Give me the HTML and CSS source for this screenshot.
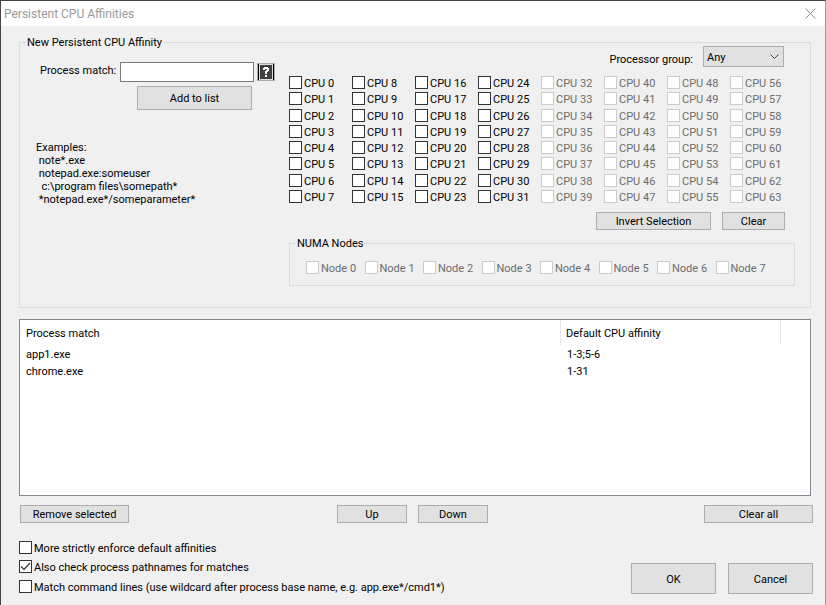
FILE: index.html
```html
<!DOCTYPE html>
<html lang="en">
<head>
<meta charset="utf-8">
<title>Persistent CPU Affinities</title>
<link rel="stylesheet" href="styles.css">
</head>
<body>
<main class="dialog">
  <header class="titlebar">
    <h1 class="title">Persistent CPU Affinities</h1>
    <button class="close" type="button" aria-label="Close">
      <svg width="11" height="11" viewBox="0 0 11 11" aria-hidden="true"><path d="M.5.5l10 10M10.5.5l-10 10" stroke="#8c8c8c" fill="none"/></svg>
    </button>
  </header>
  <form class="content">
    <fieldset class="group">
      <legend>New Persistent CPU Affinity</legend>
      <div class="columns">
        <div class="entry">
          <div class="match">
            <label for="match">Process match:</label>
            <input class="text" id="match" type="text">
            <button class="help" type="button" aria-label="Help">
              <svg width="14" height="14" viewBox="0 0 14 14" aria-hidden="true"><path d="M4 5V3h1V2h4v1h1v3H9v1H8v2H6V6h1V5h1V4H6v1zM6 10h2v2H6z" fill="#fff"/></svg>
            </button>
          </div>
          <button class="btn add" type="button">Add to list</button>
          <pre class="examples">Examples:
 note*.exe
 notepad.exe:someuser
  c:\program files\somepath*
 *notepad.exe*/someparameter*</pre>
        </div>
        <div class="processors">
          <div class="processor-group">
            <label for="pgroup">Processor group:</label>
            <select class="select" id="pgroup"><option>Any</option></select>
          </div>
          <div class="cpus" id="cpus"></div>
          <div class="cpu-actions">
            <button class="btn invert" type="button">Invert Selection</button>
            <button class="btn clear" type="button">Clear</button>
          </div>
          <fieldset class="numa">
            <legend>NUMA Nodes</legend>
            <div class="nodes" id="nodes"></div>
          </fieldset>
        </div>
      </div>
    </fieldset>
    <div class="list">
      <table>
        <thead><tr><th>Process match</th><th class="affinity">Default CPU affinity</th><th class="rest"></th></tr></thead>
        <tbody>
          <tr><td>app1.exe</td><td>1-3;5-6</td><td></td></tr>
          <tr><td>chrome.exe</td><td>1-31</td><td></td></tr>
        </tbody>
      </table>
    </div>
    <div class="list-actions">
      <button class="btn wide" type="button">Remove selected</button>
      <div class="order">
        <button class="btn move" type="button">Up</button>
        <button class="btn move" type="button">Down</button>
      </div>
      <button class="btn wide" type="button">Clear all</button>
    </div>
    <div class="footer">
      <div class="options">
        <label class="check"><input type="checkbox">More strictly enforce default affinities</label>
        <label class="check"><input type="checkbox" checked>Also check process pathnames for matches</label>
        <label class="check"><input type="checkbox">Match command lines (use wildcard after process base name, e.g. app.exe*/cmd1*)</label>
      </div>
      <div class="confirm">
        <button class="btn large" type="button">OK</button>
        <button class="btn large" type="button">Cancel</button>
      </div>
    </div>
  </form>
</main>
<script src="script.js"></script>
</body>
</html>
```
FILE: styles.css
```css
* { box-sizing: border-box; }

body {
  margin: 0;
  background: #f0f0f0;
  color: #000;
  font: 11px/13px Roboto, sans-serif;
}

.dialog {
  min-height: 100vh;
  border: 1px solid #444;
  border-right-color: #999;
  border-bottom: 0;
}

.titlebar {
  display: flex;
  align-items: center;
  justify-content: space-between;
  height: 25px;
  padding: 0 9px 0 3px;
  background: #fff;
}

.title {
  margin: 0;
  color: #999;
  font: 12px/16px Roboto, sans-serif;
}

.close {
  display: flex;
  padding: 0;
  border: 0;
  background: none;
}

.content { padding: 10px 12px 0 18px; }

fieldset {
  min-width: 0;
  margin: 0;
  padding: 0;
  border: 1px solid #dcdcdc;
}

legend {
  margin-left: 6px;
  padding: 0 1px;
}

.group {
  margin-right: 2px;
  height: 272px;
}

.columns {
  display: flex;
  justify-content: space-between;
}

.entry {
  padding: 13px 0 0 16px;
}

.match {
  display: flex;
  height: 20px;
  align-items: center;
}

.match label {
  align-self: flex-start;
  width: 84px;
  padding: 2px 0 0 4px;
  white-space: nowrap;
}

.text {
  width: 134px;
  height: 20px;
  border: 1px solid #7a7a7a;
  background: #fff;
  font: inherit;
}

.help {
  display: flex;
  align-items: center;
  justify-content: center;
  width: 18px;
  height: 18px;
  margin-left: 3px;
  padding: 0;
  border: 1px solid #aaa;
  background: #404040;
  box-shadow: inset 1px 0 #000, inset -1px 0 #000, inset 2px 1px #ddd, inset -2px -1px #ddd;
}

.btn {
  height: 18px;
  padding: 0;
  border: 1px solid #adadad;
  background: #e1e1e1;
  color: #000;
  font: inherit;
}

.add {
  display: block;
  width: 115px;
  height: 24px;
  margin: 4px 0 0 101px;
}

.examples {
  margin: 31px 0 0;
  font: inherit;
}

.processors { padding-right: 15px; }

.processor-group {
  display: flex;
  align-items: center;
  justify-content: flex-end;
  gap: 10px;
  margin-right: 11px;
  margin-top: -3px;
}

.processor-group label { padding-top: 6px; }

.select {
  width: 81px;
  height: 21px;
  padding: 2px 3px 0;
  border: 1px solid #adadad;
  border-radius: 0;
  appearance: none;
  color: #000;
  font: inherit;
  background: #e1e1e1 url("data:image/svg+xml,%3Csvg xmlns='http://www.w3.org/2000/svg' width='9' height='6'%3E%3Cpath d='M.5.5l4 4 4-4' fill='none' stroke='%23444'/%3E%3C/svg%3E") no-repeat right 4px center;
}

.cpus {
  display: grid;
  grid-template: repeat(8, 1fr) / repeat(8, 63px);
  grid-auto-flow: column;
  height: 130px;
  margin-top: 9px;
}

.check {
  display: flex;
  align-items: flex-start;
  gap: 2px;
  line-height: 15px;
  white-space: nowrap;
}

.check input {
  appearance: none;
  flex: none;
  width: 13px;
  height: 13px;
  margin: 0;
  border: 1px solid #333;
  background: #fff;
}

.check input:checked {
  background: #fff url("data:image/svg+xml,%3Csvg xmlns='http://www.w3.org/2000/svg' width='11' height='11'%3E%3Cpath d='M1 5.5l3 3 6-6.5' fill='none' stroke='%23333' stroke-width='1.2'/%3E%3C/svg%3E") no-repeat center;
}

.check:has(input:disabled) { color: #6d6d6d; }
.check input:disabled { border-color: #ccc; }

.cpu-actions {
  display: flex;
  justify-content: flex-end;
  gap: 11px;
  margin: 6px 10px 0 0;
}

.invert { width: 115px; }
.clear { width: 63px; }

.numa {
  width: 506px;
  height: 49px;
  margin-top: 7px;
}

.nodes {
  display: grid;
  grid-template-columns: repeat(8, 1fr);
  width: 468px;
  margin: 11px 0 0 16px;
}

.list {
  height: 177px;
  margin: 11px 2px 0 0;
  border: 1px solid #828790;
  background: #fff;
}

table {
  width: 100%;
  table-layout: fixed;
  border-spacing: 0;
}

th, td {
  height: 17px;
  padding: 2px 6px 0;
  text-align: left;
  font-weight: normal;
}

th {
  height: 25px;
  border-right: 1px solid #e5e5e5;
}

th.affinity { width: 220px; padding-left: 5px; }
th.rest { width: 29px; border: 0; }

.list-actions {
  display: flex;
  gap: 11px;
  margin: 9px 0 0 1px;
}

.order { display: flex; gap: 11px; margin: 0 auto 0 197px; }
.wide { width: 109px; }
.move { width: 70px; }

.footer {
  display: flex;
  justify-content: space-between;
  margin-top: 15px;
}

.options {
  display: grid;
  grid-template-rows: repeat(3, 1fr);
  height: 61px;
  padding-top: 3px;
}

.confirm {
  display: flex;
  gap: 12px;
  padding-top: 25px;
}

.large { width: 85px; height: 31px; padding-top: 2px; }
```
FILE: script.js
```js
// Fills a container with numbered check boxes; those from `limit` up are unavailable.
function addChecks(id, name, count, limit) {
  const box = document.getElementById(id);
  for (let i = 0; i < count; i++) {
    const label = document.createElement("label");
    label.className = "check";
    const input = document.createElement("input");
    input.type = "checkbox";
    input.disabled = i >= limit;
    label.append(input, `${name} ${i}`);
    box.append(label);
  }
}

addChecks("cpus", "CPU", 64, 32);
addChecks("nodes", "Node", 8, 0);
```
